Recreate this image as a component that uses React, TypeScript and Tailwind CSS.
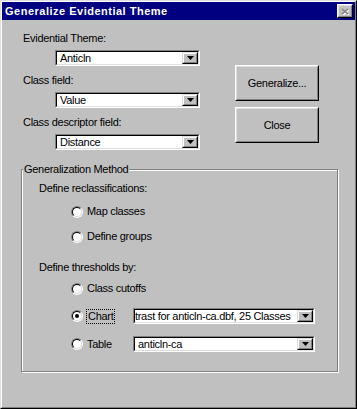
import React from "react";

const FONT = "font-['Liberation_Sans',Arial,sans-serif]";

function Arrow() {
    return (
        <div className="w-[16px] h-full border border-t-[#dfdfdf] border-l-[#dfdfdf] border-b-black border-r-black">
            <div className="w-full h-full flex items-center justify-center bg-[#c0c0c0] border border-t-white border-l-white border-b-[#808080] border-r-[#808080]">
                <svg width="7" height="4" viewBox="0 0 7 4">
                    <path d="M0 0h7L3.5 4z" fill="#000" />
                </svg>
            </div>
        </div>
    );
}

function Combo({ value, width, pad = "pl-[3px]" }: { value: string; width: string; pad?: string }) {
    return (
        <div className={`${width} h-[16px] border border-t-[#808080] border-l-[#808080] border-b-white border-r-white`}>
            <div className="h-full flex border border-t-black border-l-black border-b-[#dfdfdf] border-r-[#dfdfdf] bg-white">
                <div className={`flex-1 overflow-hidden whitespace-nowrap leading-[12px] ${pad}`}>{value}</div>
                <Arrow />
            </div>
        </div>
    );
}

function Radio({ checked = false }: { checked?: boolean }) {
    return (
        <div className="w-[12px] h-[12px] rounded-full border border-t-[#808080] border-l-[#808080] border-b-white border-r-white">
            <div className="w-full h-full rounded-full flex items-center justify-center bg-white border border-t-black border-l-black border-b-[#dfdfdf] border-r-[#dfdfdf]">
                {checked && <div className="w-[4px] h-[4px] rounded-full bg-black" />}
            </div>
        </div>
    );
}

function Button({ label }: { label: string }) {
    return (
        <div className="w-[84px] h-[36px] border border-t-white border-l-white border-b-black border-r-black">
            <div className="w-full h-full flex items-center justify-center border border-t-[#dfdfdf] border-l-[#dfdfdf] border-b-[#808080] border-r-[#808080]">
                {label}
            </div>
        </div>
    );
}

function Label({ text }: { text: string }) {
    return <div className="h-[13px] leading-[13px] whitespace-nowrap">{text}</div>;
}

export default function App() {
    return (
        <div className={`w-[357px] h-[409px] bg-[#c0c0c0] text-[11px] tracking-[-0.3px] text-black ${FONT} border border-t-[#dfdfdf] border-l-[#dfdfdf] border-b-black border-r-black`}>
            <div className="w-full h-full flex flex-col border border-t-white border-l-white border-b-[#808080] border-r-[#808080]">
                {/* title bar */}
                <div className="h-[18px] bg-[#000080] flex items-center justify-between pl-[3px] pr-[2px]">
                    <span className="text-white font-bold tracking-[0.5px] leading-[18px]">Generalize Evidential Theme</span>
                    <div className="w-[16px] h-[14px] border border-t-white border-l-white border-b-black border-r-black">
                        <div className="w-full h-full flex items-center justify-center bg-[#c0c0c0] border border-t-[#dfdfdf] border-l-[#dfdfdf] border-b-[#808080] border-r-[#808080]">
                            <svg width="8" height="7" viewBox="0 0 8 7">
                                <path d="M1 1l6 5M7 1L1 6" stroke="#fff" strokeWidth="1.6" transform="translate(1 1)" />
                                <path d="M1 1l6 5M7 1L1 6" stroke="#808080" strokeWidth="1.6" />
                            </svg>
                        </div>
                    </div>
                </div>

                {/* fields + buttons */}
                <div className="flex">
                    <div className="w-[233px] pl-[21px] pt-[12px] flex flex-col">
                        <Label text="Evidential Theme:" />
                        <div className="mt-[5px] ml-[32px]"><Combo value="Anticln" width="w-[145px]" /></div>
                        <div className="mt-[8px]"><Label text="Class field:" /></div>
                        <div className="mt-[5px] ml-[32px]"><Combo value="Value" width="w-[145px]" /></div>
                        <div className="mt-[8px]"><Label text="Class descriptor field:" /></div>
                        <div className="mt-[5px] ml-[32px]"><Combo value="Distance" width="w-[145px]" /></div>
                    </div>
                    <div className="pt-[45px] flex flex-col gap-[6px]">
                        <Button label="Generalize..." />
                        <Button label="Close" />
                    </div>
                </div>

                {/* group box */}
                <div className="mt-[19px] ml-[19px] w-[317px] h-[203px] border border-[#808080] shadow-[inset_1px_1px_0_#fff,1px_1px_0_#fff] flex flex-col">
                    <div className="-mt-[7px] ml-[1px] self-start px-[1px] bg-[#c0c0c0] h-[13px] leading-[13px]">Generalization Method</div>
                    <div className="pl-[17px] pt-[6px] flex flex-col">
                        <Label text="Define reclassifications:" />
                        <div className="mt-[10px] ml-[32px] h-[13px] flex items-center gap-[4px]">
                            <Radio /><span>Map classes</span>
                        </div>
                        <div className="mt-[12px] ml-[32px] h-[13px] flex items-center gap-[4px]">
                            <Radio /><span>Define groups</span>
                        </div>
                        <div className="mt-[18px]"><Label text="Define thresholds by:" /></div>
                        <div className="mt-[8px] ml-[32px] h-[13px] flex items-center gap-[4px]">
                            <Radio /><span>Class cutoffs</span>
                        </div>
                        <div className="mt-[13px] ml-[32px] h-[16px] flex items-center">
                            <div className="w-[62px] flex items-center gap-[3px]">
                                <Radio checked />
                                <span className="border border-dotted border-black px-[1px] leading-[13px]">Chart</span>
                            </div>
                            <Combo value="trast for anticln-ca.dbf, 25 Classes" width="w-[182px]" pad="pl-0" />
                        </div>
                        <div className="mt-[12px] ml-[32px] h-[16px] flex items-center">
                            <div className="w-[62px] flex items-center gap-[4px]">
                                <Radio /><span>Table</span>
                            </div>
                            <Combo value="anticln-ca" width="w-[182px]" />
                        </div>
                    </div>
                </div>
            </div>
        </div>
    );
}
